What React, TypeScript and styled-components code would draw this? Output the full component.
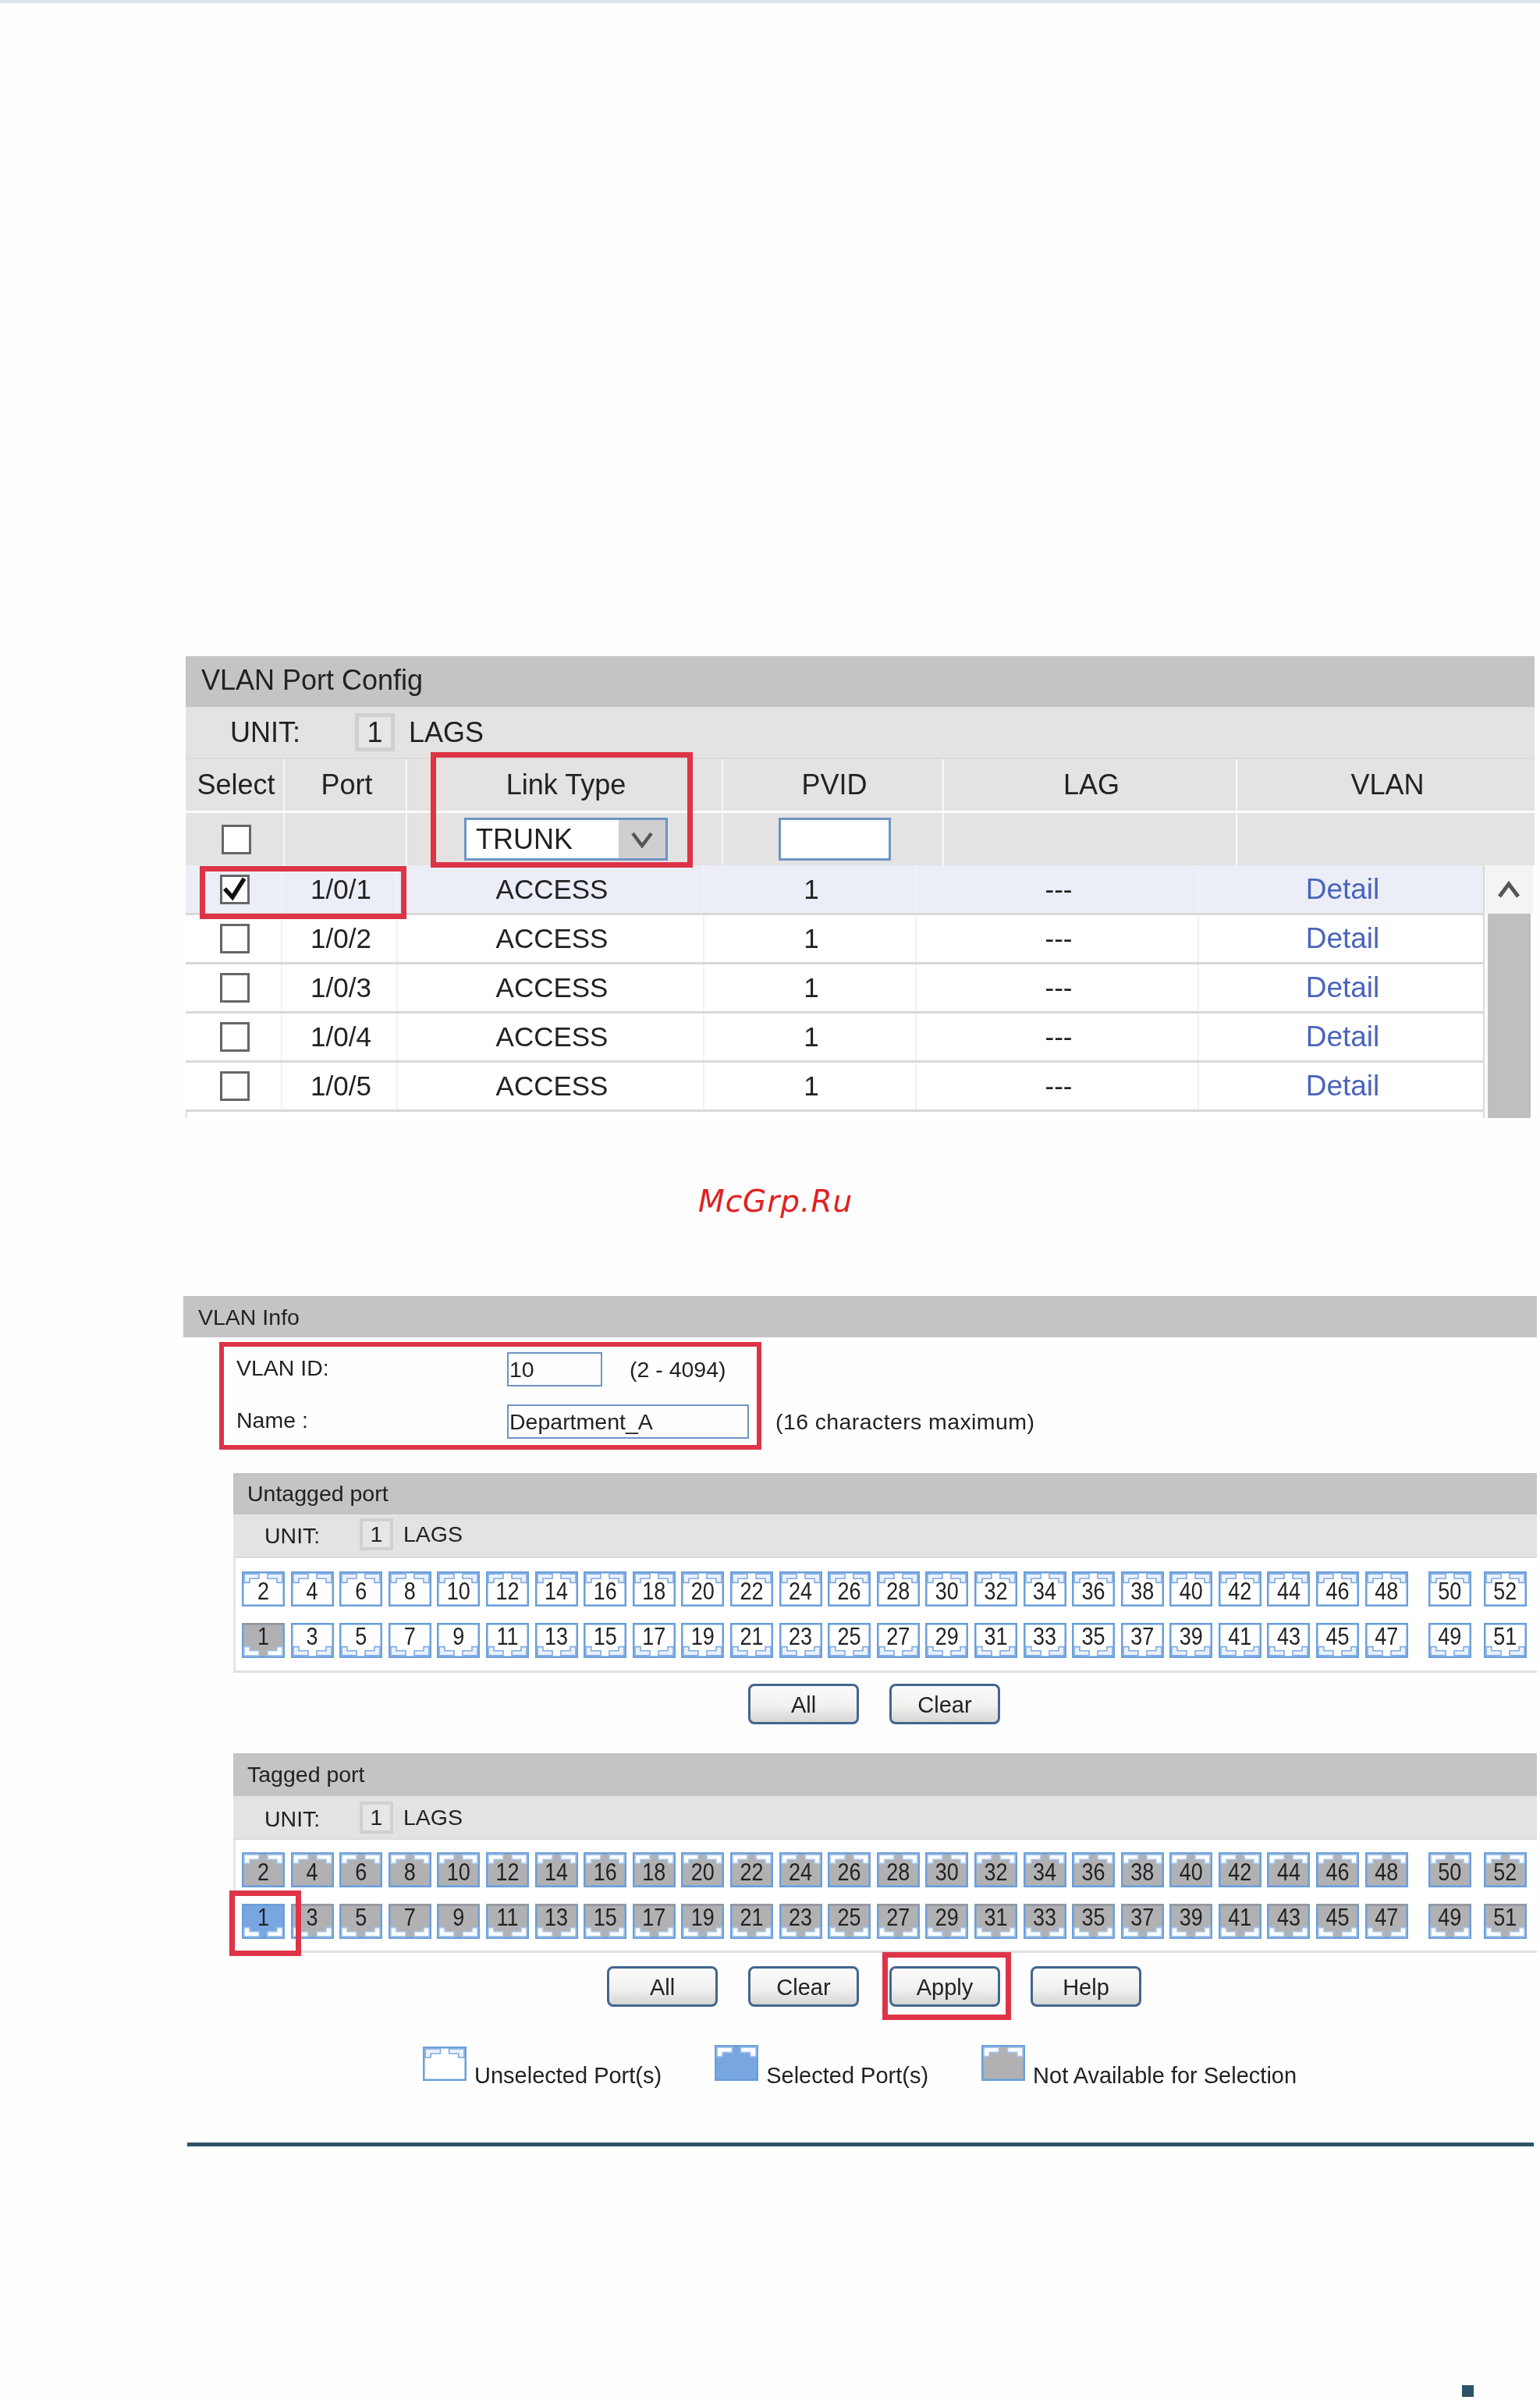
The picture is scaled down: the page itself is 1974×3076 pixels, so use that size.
import React from 'react';
import styled, { createGlobalStyle } from 'styled-components';

const GlobalStyle = createGlobalStyle`
  html, body {
    margin: 0;
    padding: 0;
    background: #fefefe;
  }
  * {
    box-sizing: border-box;
  }
`;

const RED = '#dd3447';
const NAVY = '#2b5468';
const INPUT_BLUE = '#6f94c4';
const BAR_GREY = '#c4c4c4';
const ROW_GREY = '#e4e3e1';
const PORT_BLUE = '#6b9fdb';

type PortState = 'free' | 'busy' | 'on';

const PORT_FILL: Record<PortState, string> = {
  free: '#ffffff',
  busy: '#b1b1b3',
  on: '#78a6e0',
};

const headerCols = '127px 157px 405px 283px 376px 381px';
const bodyCols = '124px 148px 393px 272px 362px 366px';

const rows = ['1/0/1', '1/0/2', '1/0/3', '1/0/4', '1/0/5'];

const range = (from: number, count: number) => Array.from({ length: count }, (_, i) => from + i * 2);

const PortArt: React.FC<{ state: PortState; flip?: boolean }> = ({ state, flip }) => {
  const notchFill = state === 'free' ? '#eaf1fb' : '#ffffff';
  const notchLine = state === 'free' ? '#7fabe3' : '#a5c6ec';
  return (
    <PortSvg viewBox="0 0 55 44" preserveAspectRatio="none">
      <g transform={flip ? 'translate(0 44) scale(1 -1)' : undefined}>
        <rect x="1.25" y="1.25" width="52.5" height="41.5" fill={PORT_FILL[state]} stroke={PORT_BLUE} strokeWidth="2.5" />
        <polygon points="3,3 22,3 22,9 10,9 10,14 3,14" fill={notchFill} stroke={notchLine} strokeWidth="1.6" />
        <polygon points="52,3 33,3 33,9 45,9 45,14 52,14" fill={notchFill} stroke={notchLine} strokeWidth="1.6" />
      </g>
      {flip && state === 'busy' && <rect x="0" y="0" width="55" height="2.5" fill="#98989a" />}
    </PortSvg>
  );
};

const Port: React.FC<{ n: number; state: PortState; flip?: boolean }> = ({ n, state, flip }) => (
  <PortBox>
    <PortArt state={state} flip={flip} />
    <PortNum $flip={flip}>{n}</PortNum>
  </PortBox>
);

const PortRow: React.FC<{ first: number; flip?: boolean; stateOf: (n: number) => PortState }> = ({
  first,
  flip,
  stateOf,
}) => (
  <PortLine>
    <PortMain>
      {range(first, 24).map((n) => (
        <Port key={n} n={n} flip={flip} state={stateOf(n)} />
      ))}
    </PortMain>
    <PortExtra>
      {range(first + 48, 2).map((n) => (
        <Port key={n} n={n} flip={flip} state={stateOf(n)} />
      ))}
    </PortExtra>
  </PortLine>
);

const PortPanel: React.FC<{ title: string; tall?: boolean; stateOf: (n: number) => PortState }> = ({
  title,
  tall,
  stateOf,
}) => (
  <Panel>
    <PanelBar $tall={tall}>{title}</PanelBar>
    <PanelUnit $tall={tall}>
      <PanelUnitLabel>UNIT:</PanelUnitLabel>
      <PanelBadge>1</PanelBadge>
      <PanelLags>LAGS</PanelLags>
    </PanelUnit>
    <PortGrid $tall={tall}>
      <PortRow first={2} stateOf={stateOf} />
      <PortRow first={1} flip stateOf={stateOf} />
    </PortGrid>
  </Panel>
);

const App: React.FC = () => {
  return (
    <Page>
      <GlobalStyle />
      <TopLine />

      <ConfigShot>
        <ConfigTitle>VLAN Port Config</ConfigTitle>
        <ConfigUnit>
          <ConfigUnitLabel>UNIT:</ConfigUnitLabel>
          <ConfigBadge>1</ConfigBadge>
          <ConfigLags>LAGS</ConfigLags>
        </ConfigUnit>
        <HeaderRow>
          <HeaderCell>Select</HeaderCell>
          <HeaderCell>Port</HeaderCell>
          <HeaderCell>Link Type</HeaderCell>
          <HeaderCell>PVID</HeaderCell>
          <HeaderCell>LAG</HeaderCell>
          <HeaderCell>VLAN</HeaderCell>
        </HeaderRow>
        <FilterRow>
          <HeaderCell>
            <CheckBox />
          </HeaderCell>
          <HeaderCell />
          <HeaderCell>
            <FakeSelect>
              <SelectValue>TRUNK</SelectValue>
              <SelectButton>
                <svg width="30" height="22" viewBox="0 0 30 22">
                  <polyline points="3,3 15,19 27,3" fill="none" stroke="#565656" strokeWidth="4.5" />
                </svg>
              </SelectButton>
            </FakeSelect>
          </HeaderCell>
          <HeaderCell>
            <PvidBox />
          </HeaderCell>
          <HeaderCell />
          <HeaderCell />
        </FilterRow>
        <ScrollArea>
          <RowList>
            {rows.map((port, i) => (
              <BodyRow key={port} $active={i === 0} $first={i === 0}>
                <BodyCell>
                  <CheckBox>
                    {i === 0 && (
                      <svg width="32" height="32" viewBox="0 0 32 32">
                        <polyline points="3,15 13,26 28,2" fill="none" stroke="#111" strokeWidth="5.5" />
                      </svg>
                    )}
                  </CheckBox>
                </BodyCell>
                <BodyCell>{port}</BodyCell>
                <BodyCell>ACCESS</BodyCell>
                <BodyCell>1</BodyCell>
                <BodyCell>---</BodyCell>
                <DetailCell>Detail</DetailCell>
              </BodyRow>
            ))}
          </RowList>
          <ScrollBar>
            <ScrollUp>
              <svg width="30" height="22" viewBox="0 0 30 22">
                <polyline points="3,20 15,4 27,20" fill="none" stroke="#555" strokeWidth="5" />
              </svg>
            </ScrollUp>
            <ScrollThumb />
          </ScrollBar>
        </ScrollArea>
        <RedBox $left={314} $top={123} $width={336} $height={148} $size={7} />
        <RedBox $left={18} $top={269} $width={265} $height={68} $size={7} />
      </ConfigShot>

      <Watermark>McGrp.Ru</Watermark>

      <InfoShot>
        <InfoTitle>VLAN Info</InfoTitle>
        <InfoForm>
          <FormRow>
            <FormLabel>VLAN ID:</FormLabel>
            <FormInput $width={122}>10</FormInput>
            <FormHint $gap={35}>(2 - 4094)</FormHint>
          </FormRow>
          <FormRow>
            <FormLabel>Name :</FormLabel>
            <FormInput $width={310}>Department_A</FormInput>
            <FormHint $gap={34} $spread>
              (16 characters maximum)
            </FormHint>
          </FormRow>
        </InfoForm>

        <PortPanel title="Untagged port" stateOf={(n) => (n === 1 ? 'busy' : 'free')} />
        <ButtonRow>
          <PlainButton>All</PlainButton>
          <PlainButton>Clear</PlainButton>
        </ButtonRow>

        <PortPanel title="Tagged port" tall stateOf={(n) => (n === 1 ? 'on' : 'busy')} />
        <ButtonRow $last>
          <PlainButton>All</PlainButton>
          <PlainButton>Clear</PlainButton>
          <PlainButton>Apply</PlainButton>
          <PlainButton>Help</PlainButton>
        </ButtonRow>

        <Legend>
          <LegendItem>
            <LegendIcon $height={44}>
              <PortArt state="free" />
            </LegendIcon>
            <LegendText>Unselected Port(s)</LegendText>
          </LegendItem>
          <LegendItem>
            <LegendIcon $height={46}>
              <PortArt state="on" />
            </LegendIcon>
            <LegendText>Selected Port(s)</LegendText>
          </LegendItem>
          <LegendItem>
            <LegendIcon $height={46}>
              <PortArt state="busy" />
            </LegendIcon>
            <LegendText>Not Available for Selection</LegendText>
          </LegendItem>
        </Legend>

        <BottomRule />

        <RedBox $left={46} $top={59} $width={695} $height={138} $size={6} />
        <RedBox $left={59} $top={762} $width={92} $height={84} $size={7} />
        <RedBox $left={896} $top={841} $width={165} $height={87} $size={7} />
      </InfoShot>

      <PageMark />
    </Page>
  );
};

export default App;

const Page = styled.div`
  width: 1974px;
  height: 3076px;
  overflow: hidden;
  background: #fefefe;
  font-family: 'Liberation Sans', Arial, sans-serif;
  color: #222;
`;

const TopLine = styled.div`
  height: 4px;
  background: #dce6eb;
`;

const ConfigShot = styled.div`
  position: relative;
  width: 1729px;
  height: 592px;
  margin: 837px 0 0 238px;
  overflow: hidden;
  font-size: 36px;
  filter: blur(0.7px);
`;

const ConfigTitle = styled.div`
  height: 65px;
  padding-left: 20px;
  line-height: 62px;
  background: ${BAR_GREY};
`;

const ConfigUnit = styled.div`
  display: flex;
  align-items: center;
  height: 67px;
  padding-left: 57px;
  background: ${ROW_GREY};
  border-bottom: 2px solid #dcdbd9;
`;

const ConfigUnitLabel = styled.span`
  width: 160px;
`;

const ConfigBadge = styled.div`
  display: flex;
  align-items: center;
  justify-content: center;
  width: 51px;
  height: 49px;
  background: #e6e6e6;
  border: 5px solid #d0d0d0;
`;

const ConfigLags = styled.span`
  margin-left: 18px;
`;

const HeaderRow = styled.div`
  display: grid;
  grid-template-columns: ${headerCols};
  height: 69px;
  background: ${ROW_GREY};
  border-bottom: 3px solid #fbfbfb;
`;

const FilterRow = styled(HeaderRow)`
  height: 67px;
  border-bottom: none;
`;

const HeaderCell = styled.div`
  display: flex;
  align-items: center;
  justify-content: center;
  padding-left: 4px;
  border-right: 2px solid #f7f7f7;
  &:last-child {
    border-right: none;
  }
`;

const CheckBox = styled.div`
  display: flex;
  align-items: center;
  justify-content: center;
  width: 38px;
  height: 38px;
  background: #fff;
  border: 3px solid #666;
`;

const FakeSelect = styled.div`
  display: flex;
  align-items: stretch;
  width: 261px;
  height: 55px;
  background: #fff;
  border: 3px solid ${INPUT_BLUE};
`;

const SelectValue = styled.span`
  flex: 1;
  padding-left: 12px;
  line-height: 49px;
`;

const SelectButton = styled.div`
  display: flex;
  align-items: center;
  justify-content: center;
  width: 60px;
  background: #cfcfcf;
`;

const PvidBox = styled.div`
  width: 144px;
  height: 55px;
  background: #fff;
  border: 3px solid ${INPUT_BLUE};
`;

const ScrollArea = styled.div`
  display: flex;
  height: 324px;
  background: #fff;
  border-left: 2px solid #e2e2e2;
`;

const RowList = styled.div`
  width: 1663px;
  margin-left: -2px;
`;

const BodyRow = styled.div<{ $active?: boolean; $first?: boolean }>`
  display: grid;
  grid-template-columns: ${bodyCols};
  height: ${(p) => (p.$first ? '64px' : '63px')};
  background: ${(p) => (p.$active ? '#eceef7' : '#fff')};
  border-bottom: 3px solid #d9d9d9;
`;

const BodyCell = styled.div`
  display: flex;
  align-items: center;
  justify-content: center;
  padding-left: 4px;
  font-size: 35px;
  border-right: 2px solid #f2f2f2;
`;

const DetailCell = styled(BodyCell)`
  font-size: 37px;
  color: #4a64ba;
`;

const ScrollBar = styled.div`
  display: flex;
  flex-direction: column;
  width: 64px;
  border-left: 2px solid #d9d9d9;
`;

const ScrollUp = styled.div`
  display: flex;
  align-items: center;
  justify-content: center;
  height: 62px;
  background: #f4f4f4;
`;

const ScrollThumb = styled.div`
  flex: 1;
  margin: 0 3px 0 4px;
  background: #bfbfbf;
`;

const RedBox = styled.div<{ $left: number; $top: number; $width: number; $height: number; $size: number }>`
  position: absolute;
  left: ${(p) => p.$left}px;
  top: ${(p) => p.$top}px;
  width: ${(p) => p.$width}px;
  height: ${(p) => p.$height}px;
  border: ${(p) => p.$size}px solid ${RED};
`;

const Watermark = styled.div`
  height: 228px;
  padding: 83px 0 0 895px;
  font-family: 'DejaVu Sans', sans-serif;
  font-style: italic;
  font-size: 39px;
  letter-spacing: 1px;
  line-height: 48px;
  color: #dd2222;
`;

const InfoShot = styled.div`
  position: relative;
  width: 1735px;
  margin-left: 235px;
  font-size: 28.5px;
  filter: blur(0.7px);
`;

const InfoTitle = styled.div`
  height: 53px;
  padding-left: 19px;
  line-height: 54px;
  background: ${BAR_GREY};
`;

const InfoForm = styled.div`
  display: flex;
  flex-direction: column;
  gap: 23px;
  height: 174px;
  padding: 19px 0 0 68px;
`;

const FormRow = styled.div`
  display: flex;
  align-items: center;
  height: 44px;
`;

const FormLabel = styled.span`
  width: 347px;
  margin-top: -4px;
`;

const FormInput = styled.div<{ $width: number }>`
  width: ${(p) => p.$width}px;
  height: 44px;
  padding-left: 1px;
  line-height: 41px;
  border: 2px solid ${INPUT_BLUE};
`;

const FormHint = styled.span<{ $gap: number; $spread?: boolean }>`
  margin-left: ${(p) => p.$gap}px;
  letter-spacing: ${(p) => (p.$spread ? '0.4px' : '0')};
`;

const Panel = styled.div`
  margin-left: 64px;
`;

const PanelBar = styled.div<{ $tall?: boolean }>`
  height: ${(p) => (p.$tall ? '55px' : '53px')};
  padding-left: 18px;
  line-height: ${(p) => (p.$tall ? '54px' : '53px')};
  background: ${BAR_GREY};
`;

const PanelUnit = styled.div<{ $tall?: boolean }>`
  display: flex;
  align-items: center;
  height: 56px;
  padding-left: 40px;
  padding-bottom: ${(p) => (p.$tall ? '0' : '3px')};
  background: ${ROW_GREY};
  border-bottom: 2px solid #dcdbd9;
`;

const PanelUnitLabel = styled.span`
  width: 122px;
  margin-top: 4px;
`;

const PanelBadge = styled.div`
  display: flex;
  align-items: center;
  justify-content: center;
  width: 43px;
  height: 41px;
  background: #e6e6e6;
  border: 4px solid #d0d0d0;
`;

const PanelLags = styled.span`
  margin-left: 13px;
`;

const PortGrid = styled.div<{ $tall?: boolean }>`
  display: flex;
  flex-direction: column;
  gap: 21px;
  padding: ${(p) => (p.$tall ? '16px 0 15px 8px' : '17px 0 16px 8px')};
  background: #fff;
  border-left: 3px solid #e4e4e4;
  border-bottom: 3px solid #e0e0e0;
`;

const PortLine = styled.div`
  display: flex;
  gap: 26px;
`;

const PortMain = styled.div`
  display: flex;
  gap: 7.6px;
`;

const PortExtra = styled.div`
  display: flex;
  gap: 16px;
`;

const PortBox = styled.div`
  position: relative;
  display: flex;
  align-items: center;
  justify-content: center;
  width: 55px;
  height: 45px;
`;

const PortSvg = styled.svg`
  position: absolute;
  inset: 0;
  width: 100%;
  height: 100%;
`;

const PortNum = styled.span<{ $flip?: boolean }>`
  position: relative;
  font-size: 27px;
  transform: translateY(${(p) => (p.$flip ? '-4px' : '4px')}) scaleY(1.15);
`;

const ButtonRow = styled.div<{ $last?: boolean }>`
  display: flex;
  justify-content: center;
  gap: 39px;
  margin-left: 64px;
  padding: ${(p) => (p.$last ? '17px' : '14px')} 28px 0 0;
  margin-bottom: ${(p) => (p.$last ? '0' : '37px')};
`;

const PlainButton = styled.div`
  display: flex;
  align-items: center;
  justify-content: center;
  width: 142px;
  height: 52px;
  padding-top: 3px;
  font-size: 29px;
  background: linear-gradient(#fbfbfb, #f1f1f0 55%, #d6d6d4);
  border: 3px solid #44658f;
  border-radius: 8px;
`;

const Legend = styled.div`
  display: flex;
  align-items: flex-end;
  gap: 68px;
  margin-top: 49px;
  padding-left: 307px;
`;

const LegendItem = styled.div`
  display: flex;
  align-items: flex-end;
  gap: 10px;
`;

const LegendIcon = styled.div<{ $height: number }>`
  position: relative;
  width: 56px;
  height: ${(p) => p.$height}px;
`;

const LegendText = styled.span`
  margin-bottom: -10px;
  font-size: 29px;
  line-height: 34px;
`;

const BottomRule = styled.div`
  width: 1726px;
  height: 5px;
  margin: 79px 0 0 5px;
  background: ${NAVY};
`;

const PageMark = styled.div`
  width: 15px;
  height: 15px;
  margin: 306px 0 0 1874px;
  background: ${NAVY};
`;
